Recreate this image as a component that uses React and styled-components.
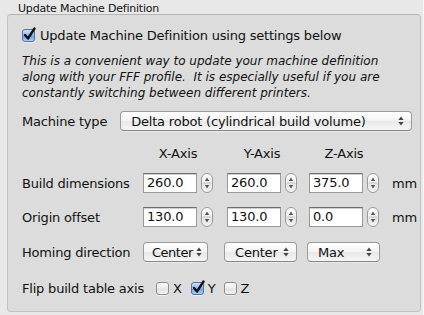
import React from "react";
import styled, { createGlobalStyle } from "styled-components";

const Global = createGlobalStyle`
  html, body { margin: 0; padding: 0; background: #e8e8e8; }
  body {
    font-family: "Lucida Grande", "DejaVu Sans", sans-serif;
    color: #111;
    width: 424px;
    height: 315px;
    overflow: hidden;
    letter-spacing: -0.2px;
  }
`;

const Page = styled.div`
  width: 424px;
  height: 315px;
  box-sizing: border-box;
  padding: 3px 2px 0 7px;
  border-right: 1px solid #f6f6f6;
`;

const Title = styled.div`
  font-size: 11px;
  line-height: 11px;
  height: 11px;
  margin-left: 11px;
  color: #111;
`;

const Group = styled.div`
  box-sizing: border-box;
  height: 298px;
  border: 1px solid #c2c2c2;
  border-top-color: #b4b4b4;
  border-radius: 4px;
  background: #dcdcdc;
  padding: 12px 8px 0 14px;
  display: flex;
  flex-direction: column;
`;

const CheckRow = styled.label`
  display: flex;
  align-items: center;
  gap: 5px;
  height: 16px;
  font-size: 13px;
  white-space: nowrap;
`;

const Box = styled.span`
  box-sizing: border-box;
  width: 13px;
  height: 13px;
  border-radius: 3px;
  border: 1px solid ${(p) => (p.$checked ? "#4f74a8" : "#8d8d8d")};
  background: ${(p) =>
    p.$checked
      ? "linear-gradient(#cfe2f8, #8db7ea 50%, #6c9fe0 51%, #a9d0f5)"
      : "linear-gradient(#fefefe, #e9e9e9 50%, #dfdfdf 51%, #f4f4f4)"};
  box-shadow: 0 1px 0 rgba(255,255,255,0.5);
  position: relative;
  flex: none;
`;

const Tick = styled.svg`
  position: absolute;
  left: 0px;
  top: -3px;
  overflow: visible;
`;

function Checkbox({ checked }) {
  return (
    <Box $checked={checked}>
      {checked && (
        <Tick width="13" height="14" viewBox="0 0 13 14">
          <path d="M2 8 L5 11.5 L11.5 1.5" fill="none" stroke="#111" strokeWidth="2.4" strokeLinecap="round" strokeLinejoin="round" />
        </Tick>
      )}
    </Box>
  );
}

const Description = styled.p`
  margin: 10px 0 0 0;
  font-style: italic;
  font-size: 12px;
  line-height: 16px;
  letter-spacing: 0;
`;

const MachineRow = styled.div`
  display: flex;
  align-items: center;
  margin-top: 10px;
  height: 20px;
  font-size: 13px;
`;

const Label = styled.span`
  font-size: 13px;
  white-space: nowrap;
`;

const Popup = styled.div`
  box-sizing: border-box;
  height: 20px;
  width: ${(p) => p.$w}px;
  margin-left: ${(p) => p.$ml || 0}px;
  border: 1px solid #9b9b9b;
  border-bottom-color: #868686;
  border-radius: 4px;
  background: linear-gradient(#ffffff, #f3f3f3 50%, #e8e8e8 51%, #f6f6f6);
  box-shadow: 0 1px 0 rgba(255,255,255,0.4);
  display: flex;
  align-items: center;
  justify-content: space-between;
  padding: 0 ${(p) => p.$pr || 7}px 0 ${(p) => p.$pl || 10}px;
  font-size: 13px;
  letter-spacing: ${(p) => p.$ls ?? -0.2}px;
  white-space: nowrap;
`;

const UpDown = styled.svg`
  flex: none;
`;

function Arrows() {
  return (
    <UpDown width="6" height="10" viewBox="0 0 6 10">
      <path d="M3 0.5 L5.6 4 L0.4 4 Z" fill="#444" />
      <path d="M3 9.5 L5.6 6 L0.4 6 Z" fill="#444" />
    </UpDown>
  );
}

const Grid = styled.div`
  display: grid;
  grid-template-columns: 121px 84px 82px 83px auto;
  align-items: center;
  margin-top: ${(p) => p.$mt || 0}px;
  height: ${(p) => p.$h || 20}px;
`;

const AxisHead = styled.span`
  width: 70px;
  text-align: center;
  font-size: 13px;
`;

const Field = styled.div`
  display: flex;
  align-items: center;
  gap: 4px;
`;

const Input = styled.div`
  box-sizing: border-box;
  width: 54px;
  height: 20px;
  background: #fff;
  border: 1px solid #9a9a9a;
  border-top-color: #6e6e6e;
  box-shadow: inset 0 1px 0 #cfcfcf;
  font-size: 13px;
  line-height: 18px;
  padding-left: 3px;
`;

const Stepper = styled.div`
  box-sizing: border-box;
  width: 12px;
  height: 20px;
  border: 1px solid #9a9a9a;
  border-radius: 6px;
  background: linear-gradient(#ffffff, #f0f0f0 50%, #e3e3e3 51%, #f5f5f5);
  display: flex;
  align-items: center;
  justify-content: center;
`;

function Spin() {
  return (
    <Stepper>
      <svg width="10" height="18" viewBox="0 0 10 18">
        <path d="M5 3.5 L7.2 7 L2.8 7 Z" fill="#555" />
        <line x1="1" y1="9" x2="9" y2="9" stroke="#c4c4c4" strokeWidth="1" />
        <path d="M5 14.5 L7.2 11 L2.8 11 Z" fill="#555" />
      </svg>
    </Stepper>
  );
}

const Unit = styled.span`
  font-size: 13px;
`;

function NumField({ value }) {
  return (
    <Field>
      <Input>{value}</Input>
      <Spin />
    </Field>
  );
}

const Flip = styled.div`
  display: flex;
  align-items: center;
  margin-top: 18px;
  height: 16px;
  font-size: 13px;
`;

const FlipItem = styled.span`
  display: flex;
  align-items: center;
  gap: 4px;
  margin-left: ${(p) => p.$ml}px;
`;

export default function App() {
  return (
    <Page>
      <Global />
      <Title>Update Machine Definition</Title>
      <Group>
        <CheckRow>
          <Checkbox checked />
          Update Machine Definition using settings below
        </CheckRow>
        <Description>
          This is a convenient way to update your machine definition
          <br />
          along with your FFF profile.&nbsp; It is especially useful if you are
          <br />
          constantly switching between different printers.
        </Description>
        <MachineRow>
          <Label>Machine type</Label>
          <Popup $w={298} $ml={13}>
            Delta robot (cylindrical build volume)
            <Arrows />
          </Popup>
        </MachineRow>
        <Grid $mt={14} $h={16}>
          <span />
          <AxisHead>X-Axis</AxisHead>
          <AxisHead>Y-Axis</AxisHead>
          <AxisHead>Z-Axis</AxisHead>
          <span />
        </Grid>
        <Grid $mt={12}>
          <Label>Build dimensions</Label>
          <NumField value="260.0" />
          <NumField value="260.0" />
          <NumField value="375.0" />
          <Unit>mm</Unit>
        </Grid>
        <Grid $mt={14}>
          <Label>Origin offset</Label>
          <NumField value="130.0" />
          <NumField value="130.0" />
          <NumField value="0.0" />
          <Unit>mm</Unit>
        </Grid>
        <Grid $mt={15}>
          <Label>Homing direction</Label>
          <Popup $w={65} $pl={8} $pr={5} $ls={-0.5}>Center<Arrows /></Popup>
          <Popup $w={73} $ml={-3}>Center<Arrows /></Popup>
          <Popup $w={73} $ml={-2}>Max<Arrows /></Popup>
          <span />
        </Grid>
        <Flip>
          <Label>Flip build table axis</Label>
          <FlipItem $ml={12}><Checkbox />X</FlipItem>
          <FlipItem $ml={9}><Checkbox checked />Y</FlipItem>
          <FlipItem $ml={8}><Checkbox />Z</FlipItem>
        </Flip>
      </Group>
    </Page>
  );
}
